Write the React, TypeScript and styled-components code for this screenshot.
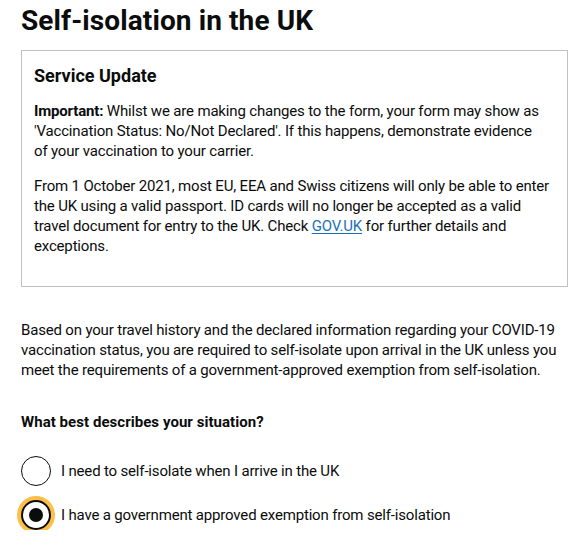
import React from "react";
import styled, { createGlobalStyle } from "styled-components";

const GlobalStyle = createGlobalStyle`
  html, body {
    margin: 0;
    padding: 0;
    background: #ffffff;
  }
  body {
    font-family: Roboto, "Liberation Sans", Arial, sans-serif;
    color: #0b0c0c;
    -webkit-font-smoothing: antialiased;
  }
`;

const Page = styled.main`
  padding: 0 8px 0 21px;
`;

const Title = styled.h1`
  margin: 3px 0 12px;
  font-size: 28px;
  line-height: 35px;
  font-weight: 700;
  letter-spacing: 0.1px;
`;

const Notice = styled.section`
  border: 1px solid #bfc1c3;
  padding: 15px 12px;
`;

const NoticeHeading = styled.h2`
  margin: 0 0 15px;
  font-size: 18px;
  line-height: 20px;
  font-weight: 700;
`;

const Body = styled.p<{ $gap?: number }>`
  margin: 0 0 ${(p) => p.$gap ?? 15}px;
  font-size: 15px;
  line-height: 20px;
  letter-spacing: -0.17px;
  white-space: nowrap;
`;

const Intro = styled(Body)`
  margin-top: 33px;
`;

const Link = styled.a`
  color: #1d70b8;
  text-decoration: underline;
  text-underline-offset: 2px;
`;

const Fieldset = styled.fieldset`
  margin: 0;
  padding: 0;
  border: 0;
`;

const Legend = styled.legend`
  padding: 0;
  margin: 0 0 24px;
  font-size: 15px;
  line-height: 20px;
  font-weight: 700;
  letter-spacing: 0.05px;
`;

const Options = styled.div`
  display: flex;
  flex-direction: column;
  gap: 14px;
`;

const Option = styled.label`
  display: flex;
  align-items: center;
  gap: 10px;
  font-size: 15px;
  line-height: 20px;
  letter-spacing: -0.17px;
  cursor: pointer;
`;

const RadioInput = styled.input.attrs({ type: "radio" })<{ $focused?: boolean }>`
  appearance: none;
  -webkit-appearance: none;
  margin: 0;
  box-sizing: border-box;
  width: 30px;
  height: 30px;
  flex: 0 0 30px;
  border-radius: 50%;
  border: 1.5px solid #0b0c0c;
  background: #ffffff;
  display: grid;
  place-items: center;
  box-shadow: ${(p) => (p.$focused ? "0 0 0 4px #ffbf47" : "none")};
  outline: none;

  &:checked {
    border-width: 2px;
  }

  &:checked::before {
    content: "";
    width: 14px;
    height: 14px;
    border-radius: 50%;
    background: #0b0c0c;
  }
`;

export default function App() {
  const [choice, setChoice] = React.useState("exempt");
  return (
    <>
      <GlobalStyle />
      <Page>
        <Title>Self-isolation in the UK</Title>
        <Notice>
          <NoticeHeading>Service Update</NoticeHeading>
          <Body>
            <strong>Important:</strong> Whilst we are making changes to the form, your form may show as
            <br />
            'Vaccination Status: No/Not Declared'. If this happens, demonstrate evidence
            <br />
            of your vaccination to your carrier.
          </Body>
          <Body>
            From 1 October 2021, most EU, EEA and Swiss citizens will only be able to enter
            <br />
            the UK using a valid passport. ID cards will no longer be accepted as a valid
            <br />
            travel document for entry to the UK. Check <Link href="#">GOV.UK</Link> for further details and
            <br />
            exceptions.
          </Body>
        </Notice>
        <Intro $gap={32}>
          Based on your travel history and the declared information regarding your COVID-19
          <br />
          vaccination status, you are required to self-isolate upon arrival in the UK unless you
          <br />
          meet the requirements of a government-approved exemption from self-isolation.
        </Intro>
        <Fieldset>
          <Legend>What best describes your situation?</Legend>
          <Options>
            <Option>
              <RadioInput
                name="situation"
                value="isolate"
                checked={choice === "isolate"}
                onChange={() => setChoice("isolate")}
              />
              I need to self-isolate when I arrive in the UK
            </Option>
            <Option>
              <RadioInput
                name="situation"
                value="exempt"
                $focused
                checked={choice === "exempt"}
                onChange={() => setChoice("exempt")}
              />
              I have a government approved exemption from self-isolation
            </Option>
          </Options>
        </Fieldset>
      </Page>
    </>
  );
}
